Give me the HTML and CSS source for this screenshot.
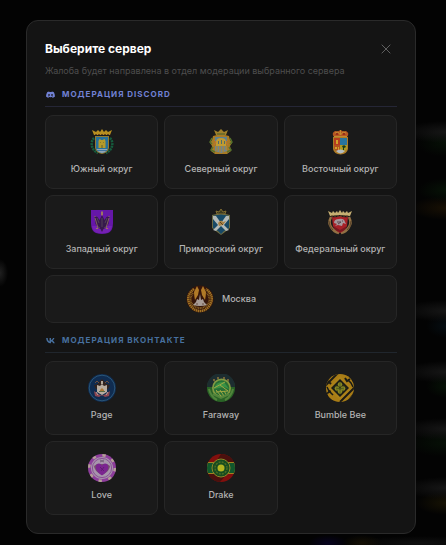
FILE: index.html
```html
<!DOCTYPE html>
<html lang="ru">
<head>
  <meta charset="UTF-8" />
  <meta name="viewport" content="width=device-width, initial-scale=1" />
  <title>Выберите сервер</title>
  <link rel="stylesheet" href="styles.css">
</head>
<body>
  <div class="modal" role="dialog" aria-labelledby="modalTitle">
    <div class="modal-header">
      <h1 id="modalTitle">Выберите сервер</h1>
      <button class="close-btn" type="button" aria-label="Закрыть">
        <svg viewBox="0 0 10 10"><path d="M.7.7l8.6 8.6M9.3.7L.7 9.3" /></svg>
      </button>
    </div>
    <p class="subtitle">Жалоба будет направлена в отдел модерации выбранного сервера</p>

    <h2 class="section-title discord">
      <svg viewBox="0 0 24 24"><path d="M20.3 5.4A19 19 0 0 0 15.600 4l-.7 1.300a17 17 0 0 0-5.800 0L8.400 4a19 19 0 0 0-4.700 1.400C.8 9.800 0 14 .4 18.200A19 19 0 0 0 6.200 21l1.300-2-2-1 .5-.4a13.500 13.500 0 0 0 12 0l.5.4-2 1 1.300 2a19 19 0 0 0 5.800-2.800c.500-4.900-.8-9-3.300-12.800zM8 15.700c-1.200 0-2.100-1.100-2.100-2.400S6.800 10.900 8 10.900s2.200 1.100 2.100 2.400c0 1.300-.9 2.400-2.100 2.400zm8 0c-1.200 0-2.100-1.100-2.100-2.400s.9-2.400 2.100-2.400 2.200 1.100 2.100 2.400c0 1.300-.9 2.400-2.100 2.400z" /></svg>
      Модерация Discord
    </h2>
    <div class="servers">
      <button class="server" type="button">
        <svg class="emblem" viewBox="0 0 28 28">
          <path d="M6 10C2 14 3 22 10 25M22 10c4 4 3 12-4 15" fill="none" stroke="#155c3d" stroke-width="2.500" stroke-dasharray="2 .8" />
          <path d="M7 8h14v12q-1 5-7 6-6-1-7-6z" fill="#8f7a35" />
          <path d="M8 9h12v11q-1 4-6 5-5-1-6-5z" fill="#26709b" />
          <path d="M8.500 21h11q-1 3-5.500 4-4.500-1-5.500-4z" fill="#8fa5b5" />
          <path d="M9 22.500h10" stroke="#2b689a" stroke-width=".8" />
          <path d="M10.500 20v-7l1-2h1v1h3v-1h1l1 2v7z" fill="#b69a2a" />
          <path d="M13 20v-3h2v3zM12 14h1v1h-1zM15 14h1v1h-1z" fill="#8a7d2c" />
          <path d="M6 7L4 2l4 2 2-2 2 2 2-3 2 3 2-2 2 2 4-2-2 5z" fill="#b88e20" />
          <path d="M7 6.500h14" stroke="#6c4819" stroke-dasharray="2 1" />
        </svg>
        Южный округ
      </button>
      <button class="server" type="button">
        <svg class="emblem" viewBox="0 0 28 28">
          <path d="M6 8l4-1h8l4 1 1 4 2 3-2 3 1 5-4 3H8l-4-3 1-5-2-3 2-3z" fill="#a97b25" />
          <path d="M5 10l-2 4 2 2m18-6l2 4-2 2M6 19l-2 3 4 2m14-5l2 3-4 2" fill="none" stroke="#55712c" stroke-width="1.500" />
          <path d="M8 9h12v5H8z" fill="#5f8190" />
          <path d="M9 14q0-4 5-4t5 4v4H9z" fill="#c09b32" />
          <path d="M8 18h12v5l-6 2-6-2z" fill="#6f8490" />
          <path d="M10 18v5m3-5v6m3-6v6m3-6v4" stroke="#b58726" stroke-width="1.200" />
          <path d="M11 13h1v3h-1zm3-1h1v4h-1zm3 1h1v3h-1z" fill="#506d6b" />
          <path d="M9 7L7 2l4 2 3-3 3 3 4-2-2 5z" fill="#a0802a" />
          <path d="M10 6h8" stroke="#445c2b" />
          <path d="M7 12l2 2-2 3m14-5l-2 2 2 3" stroke="#bd7038" fill="none" />
        </svg>
        Северный округ
      </button>
      <button class="server" type="button">
        <svg class="emblem" viewBox="0 0 28 28">
          <path d="M7 9h15v12q-1 5-7.500 5.500Q8 26 7 21z" fill="#ad7b25" />
          <path d="M8 10h6v7H8z" fill="#b73c20" />
          <path d="M14 10h7v7h-7z" fill="#28749d" />
          <path d="M8 17h6v7q-5-1-6-4z" fill="#b5501f" />
          <path d="M14 17h7v4l-3 3h-4z" fill="#b09a22" />
          <path d="M10 12h2v4h-2zM9 19h2v2H9zM12 19h1v4h-1z" fill="#d2a32a" />
          <path d="M16 18q3-2 4 1l-2 1v2h-1v-2z" fill="#153b1c" />
          <path d="M10 23q4-3 9 0-2 2-4.500 2.500Q12 25 10 23z" fill="#b4bdc1" />
          <path d="M8 9Q5 5 9 3l3 .3L14.500 2l2.500 1.300L20 3q4 2 1 6z" fill="#b75722" />
          <path d="M8 8.500h13M9 5l3-1 2.500 3L17 4l3 1M14.500 2v5" fill="none" stroke="#c28a2e" stroke-width="1" />
          <path d="M10 7l1-2 1 2m5 0l1-2 1 2" fill="none" stroke="#8e231b" />
        </svg>
        Восточный округ
      </button>
      <button class="server" type="button">
        <svg class="emblem" viewBox="0 0 28 28">
          <path d="M3 2h22v13q0 8-5 10-6 2-12 0-5-2-5-10z" fill="#6517a8" />
          <path d="M4 18q1 6 6 7h8q5-1 6-7z" fill="#7420b3" />
          <path d="M14 7l1.500 3 1 2 2-3 3-1-1 8-3 4-2 1-1.500 3-1.500-3-2-1-3-4-1-8 3 1 2 3 1-2z" fill="#36194c" />
          <path d="M9 10l2 5m8-5l-2 5M9 18l3 2m7-2l-3 2M14 10v9" stroke="#514156" />
          <path d="M7 10l3 10m11-10l-3 10M14 5v3" stroke="#987466" stroke-width=".8" />
          <path d="M13 4l1-1 1 1v3h-2zM6 9l1-1 1 1zm14 0l1-1 1 1zM8 20h2v1H8zm10 0h2v1h-2z" fill="#9c7662" />
        </svg>
        Западный округ
      </button>
      <button class="server" type="button">
        <svg class="emblem" viewBox="0 0 28 28">
          <path d="M5 7l9-2 9 2v13l-5 4-4 3-4-3-5-4z" fill="#6c6b45" />
          <path d="M6 8l8-2 8 2v12l-5 3-3 3-3-3-5-3z" fill="#174966" />
          <path d="M6 8h3l5 7 5-7h3v3l-5 6 5 5-3 1-5-5-5 5-3-1 5-5-5-6z" fill="#b3b9b7" />
          <path d="M11 15q3-4 5-1l3-1-3 4-4 1z" fill="#a88245" />
          <path d="M13 14l3 3" stroke="#5f431e" />
          <path d="M10 6L9 3l3 1 2-3 2 3 3-1-1 3z" fill="#3c3b20" stroke="#927a36" stroke-width=".8" />
        </svg>
        Приморский округ
      </button>
      <button class="server" type="button">
        <svg class="emblem" viewBox="0 0 28 28">
          <path d="M5 9q-3 6 0 10 3 5 8 6m10-16q3 6 0 10-3 5-8 6" fill="none" stroke="#927044" stroke-width="2.500" />
          <path d="M3 13q0 6 4 9m18-9q0 6-4 9" fill="none" stroke="#45331f" stroke-width=".7" />
          <path d="M6 9q4 1 8-1 4 2 8 1l-1 9q-2 5-7 7-5-2-7-7z" fill="#a62027" />
          <path d="M7 18q2 5 7 6 5-1 7-6l-7 4z" fill="#761820" />
          <path d="M8 15q0-4 5-4 5-1 6 3l1 2-3-1-1 3-4-1-3 1 2-2z" fill="#a5969b" />
          <path d="M11 14h4l-3 2m4-3h1" fill="none" stroke="#5a464e" />
          <path d="M4 8L2 3l4 2 1-2 2 2 2-2 1 2 2-3 2 3 1-2 2 2 2-2 1 2 4-2-2 5-10-1z" fill="#c5ae72" />
          <path d="M5 8h18" stroke="#6f4924" stroke-dasharray="2 1" />
        </svg>
        Федеральный округ
      </button>
      <button class="server wide" type="button">
        <svg class="emblem" viewBox="0 0 28 28">
          <circle cx="14" cy="14" r="13.500" fill="#35150a" />
          <path d="M8 4Q-1 11 4 20q4 6 10 6t10-6q5-9-4-16" fill="none" stroke="#a07224" stroke-width="2.500" stroke-dasharray="1.500 .5" />
          <path d="M7 8q-5 7 0 12 3 3 7 3t7-3q5-5 0-12" fill="none" stroke="#886022" stroke-width="2" stroke-dasharray="1 .6" />
          <path d="M11 1l2 4-1 5-3 5q-1-5-1-8zm6 0l-2 4 1 5 3 5q1-5 1-8z" fill="#b17a27" />
          <path d="M14 9l1 6 2-1 1 3 3 3q-7 2-14 0l3-3 1-3 2 1z" fill="#a89c96" />
          <path d="M11 18v2m6-2v2" stroke="#684f43" />
        </svg>
        Москва
      </button>
    </div>

    <h2 class="section-title vk">
      <svg viewBox="0 0 24 24"><path d="M13 19.500C5.200 19.500.7 14 .5 5.500h4c.2 6 2.900 8.600 5 9.100V5.500h3.800v5.200c2.200-.3 4.600-2.700 5.400-5.200h3.700c-.6 3.300-3.200 5.700-5 6.800 1.900.9 4.800 3.200 6 7.200h-4.200c-.8-2.600-2.900-4.700-5.900-5v5z" /></svg>
      Модерация ВКонтакте
    </h2>
    <div class="servers">
      <button class="server" type="button">
        <svg class="emblem" viewBox="0 0 28 28">
          <circle cx="14" cy="14" r="14" fill="#102c50" />
          <circle cx="14" cy="14" r="12.800" fill="none" stroke="#306082" stroke-width=".8" />
          <path d="M6 11q4 0 6-4l2-2 2 2q2 4 6 4l-2 4H8z" fill="#31231f" />
          <path d="M7 9l2-2 2 2m6 0l2-2 2 2" fill="none" stroke="#6e4e3c" />
          <path d="M6 17l4 3 4 2 4-2 4-3-1 5-4 1-3-2-3 2-4-1z" fill="#8e4650" />
          <path d="M8 18l2 3m10-3l-2 3" stroke="#b6a09b" />
          <path d="M9 11l3 1 2-2 2 2 3-1v7l-5 3-5-3z" fill="#b7aca0" />
          <path d="M11 17h6v1h-6z" fill="#5a6a48" />
          <path d="M12 16l2-2 2 2v1h-4z" fill="#ac7735" />
          <path d="M13 7h2v3h-2z" fill="#b2a79a" />
        </svg>
        Page
      </button>
      <button class="server" type="button">
        <svg class="emblem" viewBox="0 0 28 28">
          <circle cx="14" cy="14" r="14" fill="#296326" />
          <path d="M0 13A14 14 0 0 1 28 13H21L14 7l-7 6z" fill="#1d2d30" />
          <path d="M6 6h2M10 4h2M16 4h2M20 6h2" stroke="#90743b" stroke-width="1.500" />
          <circle cx="14.500" cy="14" r="9.500" fill="#829a43" />
          <circle cx="14.500" cy="14" r="7.800" fill="#276f35" />
          <path d="M7 15q2-8 10-7l5 7-5-2z" fill="#399244" />
          <path d="M7 14l11-6m-9 10l12-1M13 11l8 6M9 16l5 6m-1-6l4 6m0-5l2 3" stroke="#a1a743" stroke-width="1" fill="none" />
          <path d="M2 15q2 8 8 11M26 15q-2 8-8 11M6 20l8 4 8-4" fill="none" stroke="#51843b" stroke-width="2" />
        </svg>
        Faraway
      </button>
      <button class="server" type="button">
        <svg class="emblem" viewBox="0 0 28 28">
          <clipPath id="beeClip"><circle cx="14" cy="14" r="14" /></clipPath>
          <g clip-path="url(#beeClip)">
            <path d="M0 0h28v28H0z" fill="#a87c16" />
            <path d="M-3 14L14-3m-14 24l6-6m8 13l15-15m-9 17L31 16M2 7l3 3m17-8l3 3" stroke="#1c1b15" stroke-width="2" />
            <path d="M0 21l5-3 5 6-4 4M18 2l5 6 3-2-3-5z" fill="#a87c16" />
            <path d="M14 2l12 12-12 12L2 14z" fill="#ab8119" />
            <path d="M14 5l9 9-9 9-9-9z" fill="#191b16" />
            <path d="M14 7l7 7-7 7-7-7z" fill="#2c2d15" />
            <path d="M1 13l2 4 4 4M27 13l-2-4-3-3" stroke="#171a17" stroke-width="1.500" fill="none" />
            <path d="M19 4l2 3 3-2" stroke="#191b16" stroke-width="2" fill="none" />
          </g>
          <g fill="#878923">
            <circle cx="14" cy="10.500" r="2.200" /><circle cx="11" cy="14.500" r="2.300" />
            <circle cx="17" cy="14.500" r="2.300" /><circle cx="14" cy="17.500" r="2.200" />
          </g>
          <path d="M14 9v10m-4-5l8 1m0-1l-8 1" stroke="#48541b" stroke-width=".7" />
        </svg>
        Bumble Bee
      </button>
      <button class="server" type="button">
        <svg class="emblem" viewBox="0 0 28 28">
          <circle cx="14" cy="14" r="14" fill="#8d3d9b" />
          <circle cx="14" cy="14" r="12.800" fill="none" stroke="#b3a196" stroke-width="2.400" stroke-dasharray="3.400 6.650" />
          <circle cx="14" cy="14" r="11" fill="#a795ac" />
          <circle cx="14" cy="14" r="9.600" fill="none" stroke="#8a4f96" stroke-width="1" />
          <path d="M14 21Q6 17 6 12l3-2h10l3 2q0 5-8 9z" fill="#75586a" />
          <path d="M14 21.500q-6-4-6.500-8Q8 9.500 11 9.500q2 0 3 2 1-2 3-2 3 0 3.500 4-.5 4-6.500 8z" fill="#7b2590" />
          <path d="M12 13l4 4m0-4l-3 4" stroke="#5b1a6c" stroke-width=".8" />
          <path d="M12 6l4 2m0-2l-4 2" stroke="#6a5470" stroke-width=".8" />
        </svg>
        Love
      </button>
      <button class="server" type="button">
        <svg class="emblem" viewBox="0 0 28 28">
          <clipPath id="drakeClip"><circle cx="14" cy="14" r="14" /></clipPath>
          <g clip-path="url(#drakeClip)">
            <path d="M0 0h28v28H0z" fill="#820f0d" />
            <path d="M14 0h14v9H8zM0 20h20l-7 8H0z" fill="#4b100d" />
            <path d="M0 8h28v12H0z" fill="#a18220" />
            <path d="M0 9h28v10H0z" fill="#11572c" />
          </g>
          <circle cx="14" cy="14" r="9" fill="#174c20" stroke="#8e8627" />
          <circle cx="14" cy="14" r="6" fill="none" stroke="#4b6b22" stroke-width="1.500" stroke-dasharray="2 1.140" />
          <circle cx="14" cy="14" r="3.500" fill="#b3b420" />
        </svg>
        Drake
      </button>
    </div>
  </div>
</body>
</html>
```
FILE: styles.css
```css
* {
  box-sizing: border-box;
}

body {
  margin: 0;
  min-height: 100vh;
  padding: 20px 30px 11px 26px;
  font-family: Inter, 'Liberation Sans', sans-serif;
  color: #b4b4b4;
  /* dimmed, out of focus page behind the dialog */
  background-color: #030303;
  background-image:
    radial-gradient(8px 14px at 0 273px, #202020, transparent),
    radial-gradient(46px 11px at 100% 132px, #161616, transparent),
    radial-gradient(30px 14px at 100% 143px, #061006, transparent),
    radial-gradient(28px 12px at 100% 190px, #061206, transparent),
    radial-gradient(36px 12px at 100% 208px, #181004, transparent),
    radial-gradient(46px 11px at 100% 311px, #161616, transparent),
    radial-gradient(20px 12px at 100% 326px, #050d12, transparent),
    radial-gradient(46px 11px at 100% 372px, #161616, transparent),
    radial-gradient(20px 12px at 100% 386px, #061206, transparent),
    radial-gradient(46px 11px at 100% 429px, #161616, transparent),
    radial-gradient(40px 14px at 100% 443px, #061006, transparent),
    radial-gradient(46px 11px at 100% 488px, #161616, transparent),
    radial-gradient(30px 12px at 100% 503px, #171304, transparent),
    radial-gradient(20px 8px at 328px 543px, #070320, transparent),
    radial-gradient(20px 8px at 362px 543px, #151004, transparent),
    radial-gradient(70px 7px at 420px 543px, #101010, transparent);
}

.modal {
  padding: 18px;
  background: #141414;
  border: 1px solid #2a2a2a;
  border-radius: 12px;
}

.modal-header {
  display: flex;
  justify-content: space-between;
  align-items: center;
}

h1 {
  margin: 0;
  font-size: 12px;
  line-height: 20px;
  font-weight: 700;
  color: #fff;
}

.close-btn {
  display: flex;
  justify-content: center;
  align-items: center;
  width: 22px;
  height: 20px;
  padding: 0;
  background: none;
  border: none;
  cursor: pointer;
}

.close-btn svg {
  width: 10px;
  height: 10px;
  stroke: #606060;
  stroke-width: 1;
}

.subtitle {
  margin: 5px 0 10px;
  font-size: 9px;
  line-height: 14px;
  color: #4e4e4e;
}

.section-title {
  display: flex;
  align-items: center;
  gap: 6px;
  margin: 10px 0 8px;
  padding-bottom: 6px;
  border-bottom: 1px solid #262626;
  font-size: 8px;
  line-height: 12px;
  font-weight: 700;
  letter-spacing: 1px;
  text-transform: uppercase;
}

.section-title svg {
  width: 11px;
  height: 9px;
  fill: currentColor;
}

.discord {
  color: #7181d4;
  border-color: #252636;
}

.vk {
  margin-top: 11px;
  color: #47709f;
  border-color: #20262d;
}

.servers {
  display: grid;
  grid-template-columns: repeat(3, 1fr);
  gap: 6px;
}

.server {
  display: flex;
  flex-direction: column;
  align-items: center;
  gap: 6px;
  padding: 12px 0;
  font-family: inherit;
  font-size: 9px;
  line-height: 14px;
  font-weight: 500;
  color: #b4b4b4;
  white-space: nowrap;
  background: #1a1a1a;
  border: 1px solid #262626;
  border-radius: 8px;
  cursor: pointer;
}

.server:hover {
  background: #202020;
}

.server.wide {
  grid-column: 1 / -1;
  flex-direction: row;
  justify-content: center;
  gap: 8px;
  padding: 9px 0;
}

.emblem {
  width: 28px;
  height: 28px;
}
```
